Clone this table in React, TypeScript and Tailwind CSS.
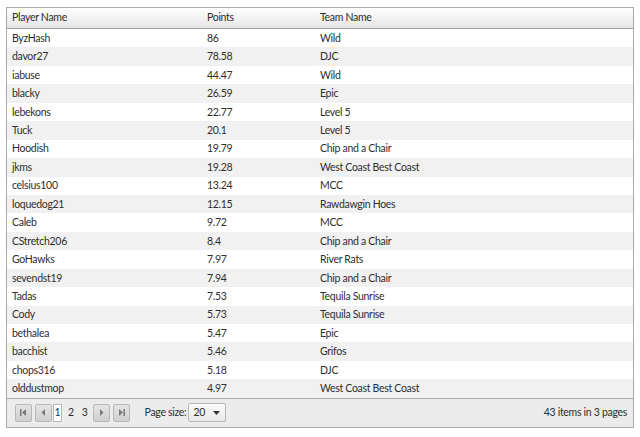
import React from "react";

const rows: [string, string, string][] = [
  ["ByzHash", "86", "Wild"],
  ["davor27", "78.58", "DJC"],
  ["iabuse", "44.47", "Wild"],
  ["blacky", "26.59", "Epic"],
  ["lebekons", "22.77", "Level 5"],
  ["Tuck", "20.1", "Level 5"],
  ["Hoodish", "19.79", "Chip and a Chair"],
  ["jkms", "19.28", "West Coast Best Coast"],
  ["celsius100", "13.24", "MCC"],
  ["loquedog21", "12.15", "Rawdawgin Hoes"],
  ["Caleb", "9.72", "MCC"],
  ["CStretch206", "8.4", "Chip and a Chair"],
  ["GoHawks", "7.97", "River Rats"],
  ["sevendst19", "7.94", "Chip and a Chair"],
  ["Tadas", "7.53", "Tequila Sunrise"],
  ["Cody", "5.73", "Tequila Sunrise"],
  ["bethalea", "5.47", "Epic"],
  ["bacchist", "5.46", "Grifos"],
  ["chops316", "5.18", "DJC"],
  ["olddustmop", "4.97", "West Coast Best Coast"],
];

const font = { fontFamily: "Lato, 'Open Sans', sans-serif" };

function PagerBtn({ kind }: { kind: "first" | "prev" | "next" | "last" }) {
  return (
    <div className="w-[17px] h-[18px] border border-[#b8b8b8] rounded-[2px] bg-gradient-to-b from-[#e4e4e4] to-[#cfcfcf] flex items-center justify-center">
      <svg width="9" height="9" viewBox="0 0 9 9">
        {kind === "first" && (
          <>
            <rect x="1" y="1" width="1.5" height="7" fill="#7a7a7a" />
            <polygon points="7,1 3,4.5 7,8" fill="#7a7a7a" />
          </>
        )}
        {kind === "prev" && <polygon points="6,1 2.5,4.5 6,8" fill="#7a7a7a" />}
        {kind === "next" && <polygon points="3,1 6.5,4.5 3,8" fill="#7a7a7a" />}
        {kind === "last" && (
          <>
            <polygon points="2,1 6,4.5 2,8" fill="#7a7a7a" />
            <rect x="6.5" y="1" width="1.5" height="7" fill="#7a7a7a" />
          </>
        )}
      </svg>
    </div>
  );
}

export default function App() {
  return (
    <div className="w-[640px] h-[437px] bg-white pt-[7px] pl-[6px] text-[#2e2e2e] text-[10.5px] tracking-[-0.3px]" style={font}>
      <div className="w-[628px] border border-[#a9a9a9] flex flex-col">
        <div className="h-[21px] flex items-center bg-gradient-to-b from-[#ffffff] to-[#e5e5e5] border-b border-[#a0a0a0]">
          <div className="w-[195px] pl-[5px]">Player Name</div>
          <div className="w-[113px] pl-[5px]">Points</div>
          <div className="flex-1 pl-[5px]">Team Name</div>
        </div>
        {rows.map((r, i) => (
          <div
            key={i}
            className={`h-[18.45px] flex items-center pt-[1px] ${i % 2 === 1 ? "bg-[#f1f1f1]" : "bg-white"}`}
          >
            <div className="w-[195px] pl-[5px]">{r[0]}</div>
            <div className="w-[113px] pl-[5px]">{r[1]}</div>
            <div className="flex-1 pl-[5px]">{r[2]}</div>
          </div>
        ))}
        <div className="h-[29px] border-t border-[#a9a9a9] bg-[#ececec] flex items-center pl-[8px] pr-[6px]">
          <div className="flex items-center gap-[3px]">
            <PagerBtn kind="first" />
            <PagerBtn kind="prev" />
          </div>
          <div className="ml-[1px] w-[9px] h-[18px] border border-[#b8b8b8] bg-white flex items-center justify-center">1</div>
          <div className="ml-[6px]">2</div>
          <div className="ml-[8px]">3</div>
          <div className="ml-[5px] flex items-center gap-[3px]">
            <PagerBtn kind="next" />
            <PagerBtn kind="last" />
          </div>
          <div className="ml-[15px]">Page size:</div>
          <div className="ml-[2px] w-[38px] h-[19px] border border-[#b8b8b8] rounded-[2px] bg-gradient-to-b from-[#fafafa] to-[#e8e8e8] flex items-center pl-[4px] pr-[5px] justify-between">
            <span>20</span>
            <svg width="7" height="4" viewBox="0 0 7 4">
              <polygon points="0,0 7,0 3.5,4" fill="#333" />
            </svg>
          </div>
          <div className="ml-auto">43 items in 3 pages</div>
        </div>
      </div>
    </div>
  );
}
